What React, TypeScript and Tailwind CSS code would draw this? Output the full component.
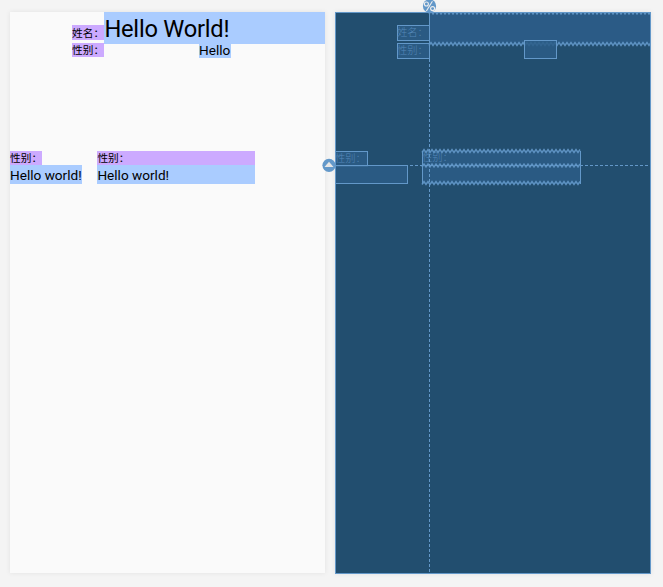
import type { ReactNode } from 'react';

const label = 'bg-[#ccaaff] font-["Noto_Sans_CJK_SC",sans-serif] text-[10.7px] whitespace-pre';
const value = 'bg-[#aaccff] font-[Roboto,sans-serif] text-black whitespace-nowrap';

function Zigzag({ x, y, width }: { x: number; y: number; width: number }) {
  const points: string[] = [];
  for (let i = 0; i <= width; i += 2) points.push(`${x + i},${y + ((i / 2) % 2 ? -1.5 : 1.5)}`);
  return <polyline points={points.join(' ')} fill="none" stroke="#6398c9" strokeOpacity="0.9" strokeWidth="1.5" />;
}

function Box({ className, children }: { className: string; children?: ReactNode }) {
  return (
    <div className={`absolute border border-[#6398c9] bg-[#2c5d87]/85 font-["Noto_Sans_CJK_SC",sans-serif] text-[10.3px] leading-[12px] whitespace-nowrap text-[#5488b8] ${className}`}>
      <span className="-ml-px block font-light">{children}</span>
    </div>
  );
}

function Design() {
  return (
    <section className="h-[561px] w-[315px] bg-[#fafafa] text-black shadow-[0_0_5px_rgba(0,0,0,0.08)]">
      <div className="ml-[62px] flex h-[31px]">
        <span className={`mt-[13px] h-[15px] w-[32.4px] leading-[15px] ${label}`}>姓名：</span>
        <span className={`h-[31.5px] flex-1 text-[23.7px] leading-[35px] tracking-[-0.24px] ${value}`}>Hello World!</span>
      </div>
      <div className="ml-[62px] flex">
        <span className={`h-[14px] w-[32.4px] leading-[14px] ${label}`}>性别：</span>
        <span className={`ml-[94.6px] h-[15px] w-8 text-[13.6px] leading-[14px] ${value}`}>Hello</span>
      </div>
      <div className="mt-[93px] flex gap-[15px]">
        <div className="flex w-[72.4px] flex-col">
          <span className={`h-[14px] w-[32.4px] leading-[14px] ${label}`}>性别：</span>
          <span className={`h-[19px] text-[13.6px] leading-[21px] ${value}`}>Hello world!</span>
        </div>
        <div className="flex w-[157.6px] flex-col">
          <span className={`h-[14px] leading-[14px] ${label}`}>性别：</span>
          <span className={`h-[19px] text-[13.6px] leading-[21px] ${value}`}>Hello world!</span>
        </div>
      </div>
    </section>
  );
}

function Blueprint() {
  return (
    <section className="relative h-[562px] w-[316px] bg-[#224e6f] shadow-[0_0_5px_rgba(0,0,0,0.08)]">
      <div className="absolute top-0 left-[94px] h-[32px] w-[222px] bg-[#2b5b86]" />
      <Box className="top-[13px] left-[62px] h-4 w-[33px]">姓名：</Box>
      <Box className="top-[31px] left-[62px] h-4 w-[33px]">性别：</Box>
      <Box className="top-[139px] left-0 h-[16px] w-[33px]">性别：</Box>
      <Box className="top-[153px] left-0 h-[19px] w-[73px]" />
      <Box className="top-[139px] left-[87px] h-[33px] w-[159px] border-y-0">性别：</Box>
      <svg className="absolute inset-0 overflow-hidden" width="316" height="562">
        <Zigzag x={94} y={0.5} width={222} />
        <Zigzag x={94} y={32} width={222} />
        <Zigzag x={87} y={139} width={158} />
        <Zigzag x={87} y={153.5} width={158} />
        <Zigzag x={87} y={171} width={158} />
        <path d="M94.5 0V47" stroke="#6398c9" />
        <path d="M94.5 47V562M0 153.5H316" stroke="#6398c9" strokeDasharray="3 2" fill="none" />
      </svg>
      <Box className="top-[28px] left-[189px] h-[19px] w-[33px] bg-[#2c5d87]/60" />
      <div className="absolute inset-0 border border-[#6398c9]" />
      <svg className="absolute inset-0 overflow-visible" width="316" height="562">
        <circle cx="94.5" cy="-6" r="6.6" fill="#6398c9" />
        <g fill="none" stroke="#eee" strokeWidth="1.1">
          <circle cx="91.4" cy="-8" r="2" />
          <circle cx="97.6" cy="-3.4" r="2" />
          <path d="M97.4-10.8L91.4-1" />
        </g>
        <circle cx="-6" cy="153.3" r="6.6" fill="#6398c9" />
        <path d="M-10.5 155L-6 149.8L-1.5 155Z" fill="#e6e6e6" />
      </svg>
    </section>
  );
}

export default function App() {
  return (
    <main className="flex h-[587px] w-[663px] gap-[10px] overflow-hidden bg-[#f4f4f4] pt-3 pl-[10px]">
      <Design />
      <Blueprint />
    </main>
  );
}
